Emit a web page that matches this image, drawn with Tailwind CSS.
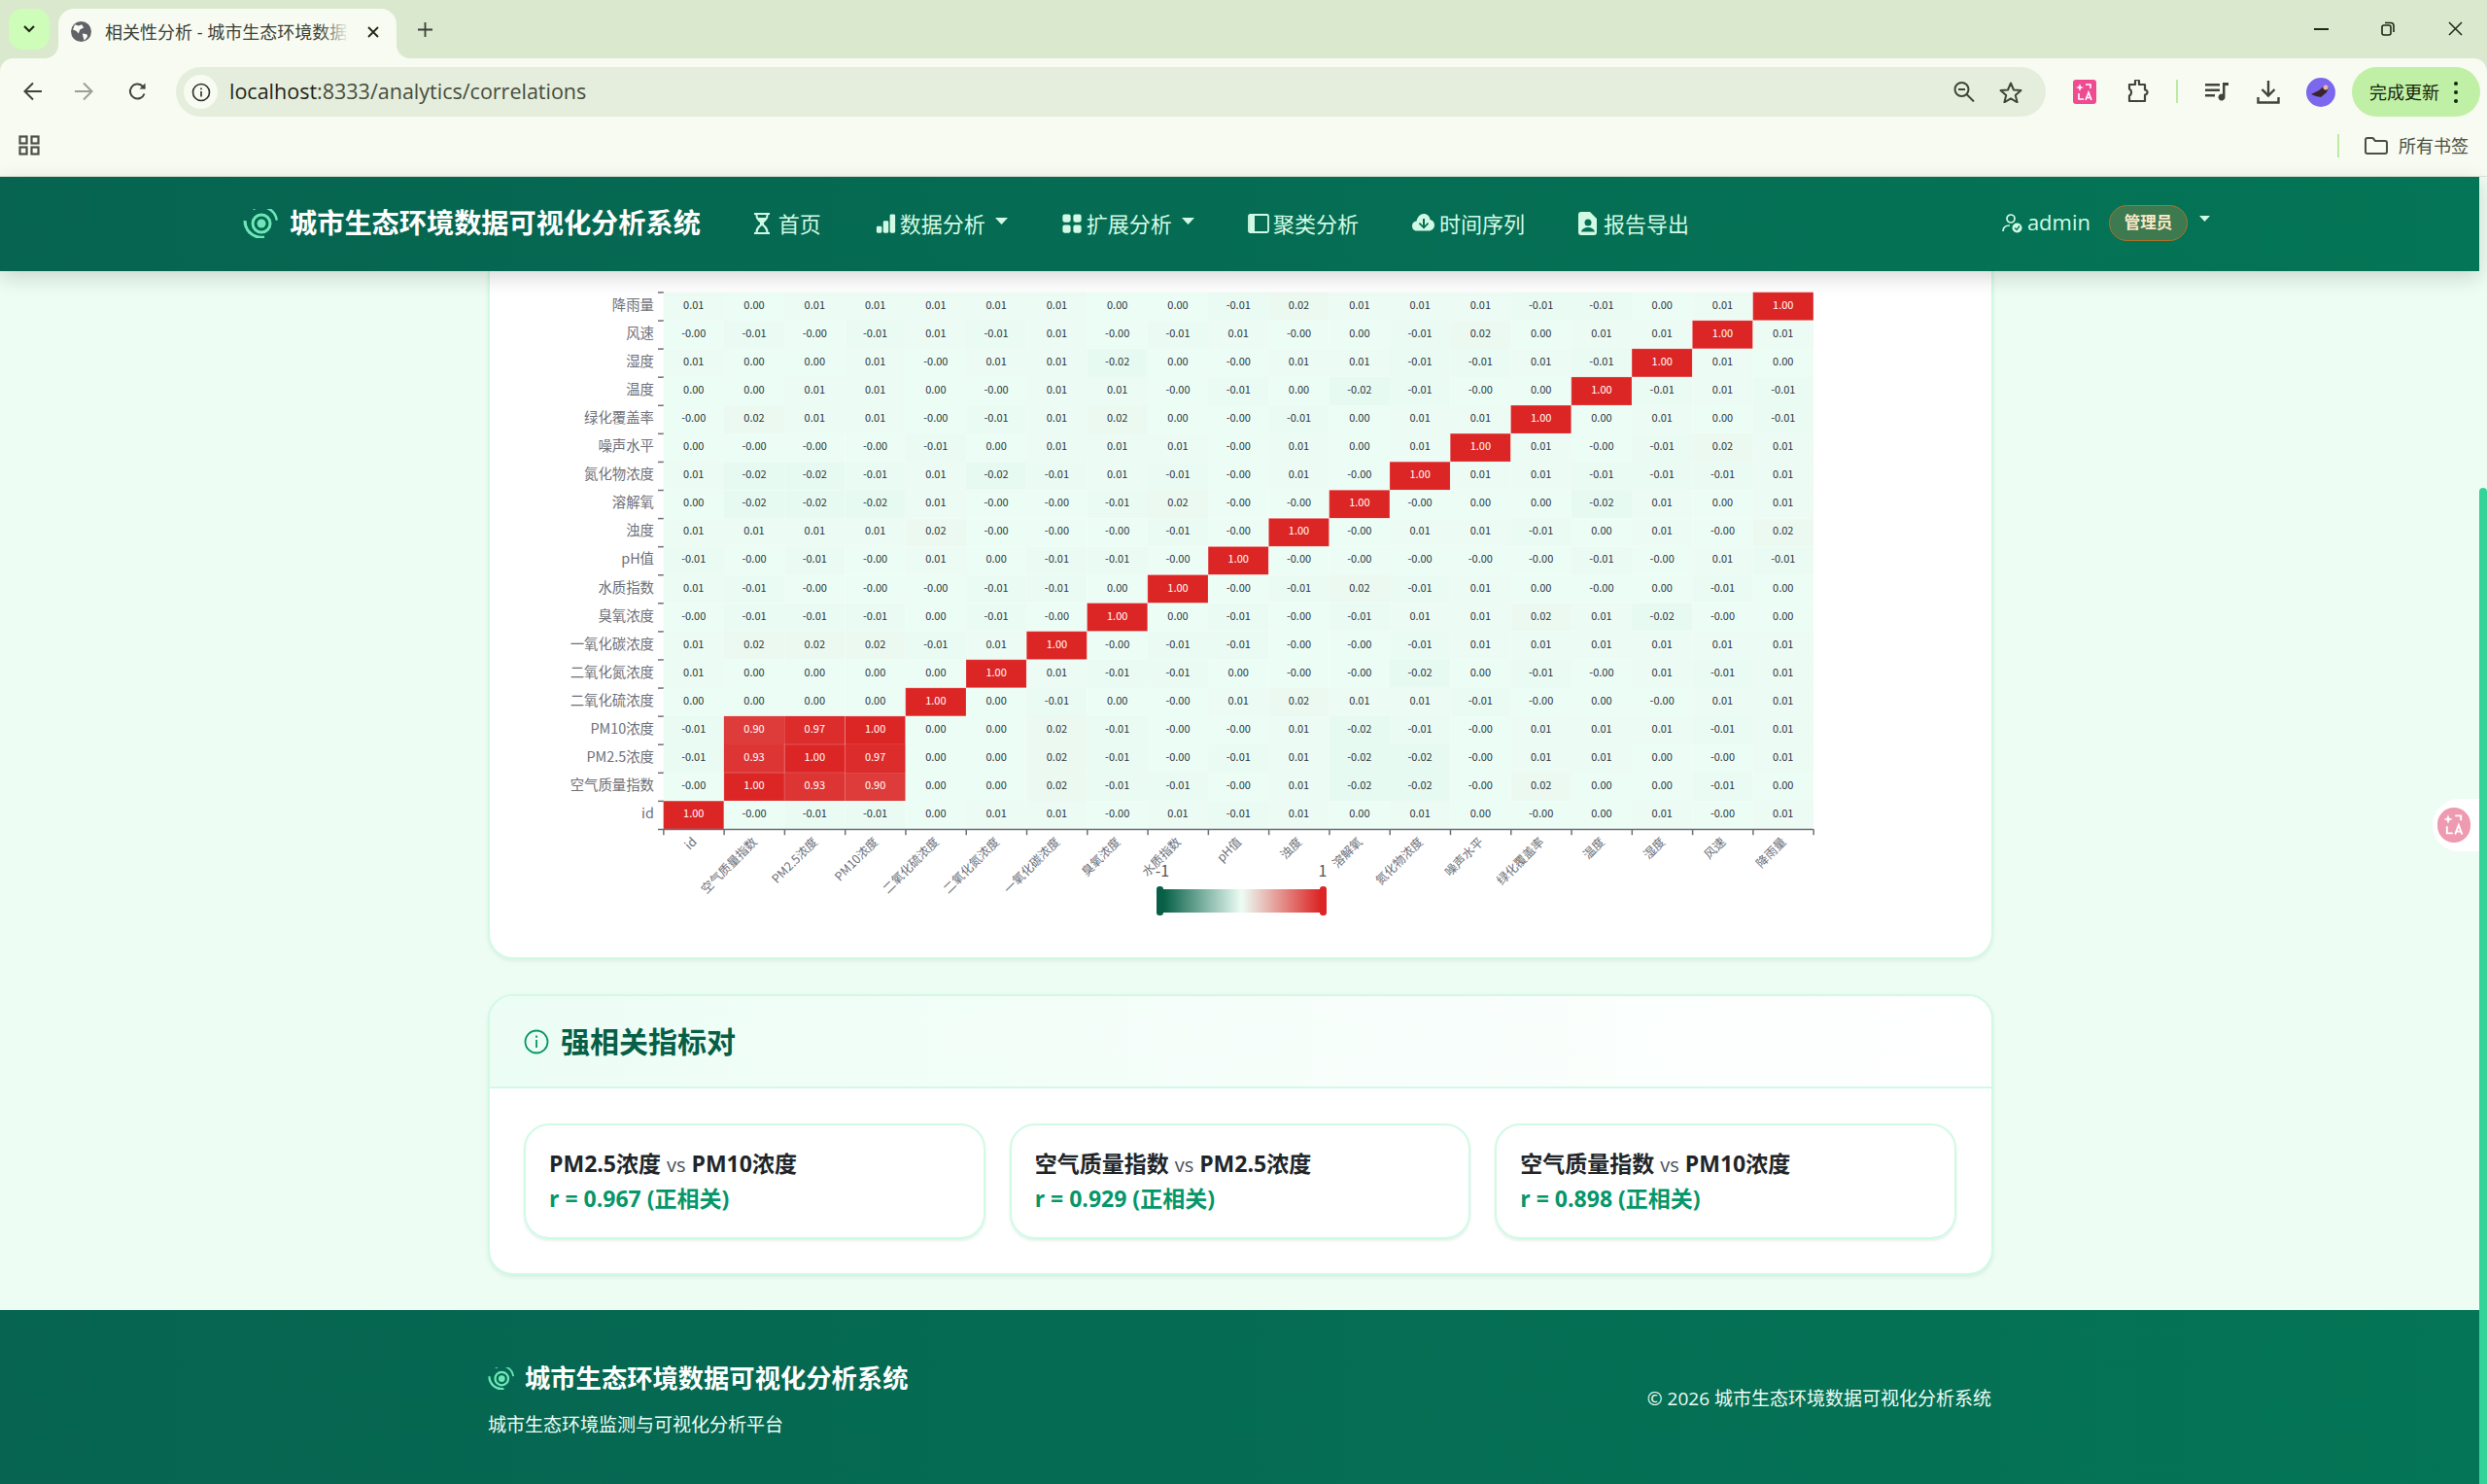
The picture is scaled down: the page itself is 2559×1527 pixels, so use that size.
<!DOCTYPE html>
<html lang="zh-CN">
<head>
    <meta charset="UTF-8">
    <title>相关性分析 - 城市生态环境数据可视化分析系统</title>
    <script src="https://cdn.jsdelivr.net/npm/@tailwindcss/browser@4"></script>
</head>
<body class="w-[2559px] h-[1527px] overflow-hidden bg-[#dae8ce] font-['Open_Sans','Noto_Sans_CJK_SC',sans-serif]">

    <!-- tab strip -->
    <div class="h-[60px] flex items-end">
        <div class="ml-[9px] mb-[9px] w-[42px] h-[42px] rounded-[14px] bg-[#cdfdb8] flex items-center justify-center">
            <svg class="w-[12px] h-[8px]" viewBox="0 0 12 8" fill="none" stroke="#1f2a18" stroke-width="2.2"><path d="M1 1l5 5 5-5"/></svg>
        </div>
        <div class="relative ml-[9px] w-[348px] h-[51px] rounded-t-[16px] bg-[#f7fbf1] flex items-center pl-[13px] pb-[4px]">
            <svg class="absolute left-[-14px] bottom-0 w-[14px] h-[14px]" viewBox="0 0 14 14" fill="#f7fbf1"><path d="M14 0V14H0A14 14 0 0 0 14 0Z"/></svg>
            <svg class="absolute right-[-14px] bottom-0 w-[14px] h-[14px]" viewBox="0 0 14 14" fill="#f7fbf1"><path d="M0 0V14H14A14 14 0 0 1 0 0Z"/></svg>
            <svg class="w-[21px] h-[21px] shrink-0" viewBox="0 0 16 16"><circle cx="8" cy="8" r="8" fill="#5f6368"/><path d="M3 2.5l3 1 2.500-1L10 5 7 6.500 6 9.500 4 7.500 1.500 6.500zM9 9.500l3.500.5.5 2-2.500 3L9.500 12z" fill="#f7fbf1"/></svg>
            <div class="relative ml-[14px] w-[251px] whitespace-nowrap text-[18px] leading-none text-[#3b4136]">
                相关性分析 - 城市生态环境数据
                <div class="absolute right-0 top-0 w-[30px] h-full bg-gradient-to-r from-transparent to-[#f7fbf1]"></div>
            </div>
            <svg class="ml-[19px] w-[12px] h-[12px] shrink-0" viewBox="0 0 12 12" stroke="#1f2a18" stroke-width="1.800"><path d="M1 1l10 10M11 1L1 11"/></svg>
        </div>
        <svg class="ml-[22px] mb-[22px] w-[15px] h-[15px]" viewBox="0 0 15 15" stroke="#3b4136" stroke-width="1.800"><path d="M7.500 0v15M0 7.500h15"/></svg>
        <div class="ml-auto flex items-center mb-[23px] mr-[25px]">
            <div class="w-[15px] h-[2px] bg-[#1f2a18]"></div>
            <svg class="ml-[54px] w-[14px] h-[15px]" viewBox="0 0 14 15" fill="none" stroke="#1f2a18" stroke-width="1.600"><rect x="1" y="4" width="9" height="10" rx="2"/><path d="M4 1.500h6a3 3 0 0 1 3 3V11"/></svg>
            <svg class="ml-[55px] w-[15px] h-[15px]" viewBox="0 0 15 15" stroke="#1f2a18" stroke-width="1.500"><path d="M1 1l13 13M14 1L1 14"/></svg>
        </div>
    </div>

    <!-- toolbar -->
    <div class="h-[122px] rounded-t-[14px] bg-[#f7fbf1] border-b border-[#dfe3d6]">
        <div class="h-[60px] pt-[9px] flex items-start">
            <svg class="ml-[24px] mt-[15px] w-[19px] h-[20px]" viewBox="0 0 19 20" fill="none" stroke="#3f4639" stroke-width="2"><path d="M19 10H2M10 1.500L1.500 10l8.500 8.500"/></svg>
            <svg class="ml-[34px] mt-[15px] w-[19px] h-[20px]" viewBox="0 0 19 20" fill="none" stroke="#9aa096" stroke-width="2"><path d="M0 10h17M9 1.500l8.500 8.500L9 18.500"/></svg>
            <svg class="ml-[36px] mt-[15px] w-[19px] h-[20px]" viewBox="0 0 19 20" fill="none" stroke="#3f4639" stroke-width="2"><path d="M16.500 12.500A7.500 7.500 0 1 1 14.500 4.500L17 7"/><path d="M17.500 1.500V7.500H11.500" fill="#3f4639" stroke="none"/></svg>
            <div class="ml-[30px] w-[1924px] h-[51px] rounded-full bg-[#e5eedc] flex items-center pl-[8px] pr-[24px]">
                <div class="w-[35px] h-[35px] rounded-full bg-[#f7fbf1] flex items-center justify-center">
                    <svg class="w-[20px] h-[20px]" viewBox="0 0 20 20" fill="none" stroke="#2a3024" stroke-width="1.600"><circle cx="10" cy="10" r="8.500"/><path d="M10 9v5.500M10 5.500v1.800"/></svg>
                </div>
                <div class="ml-[12px] mb-[2px] text-[21.500px] leading-none text-[#1f2419] whitespace-nowrap">localhost<span class="text-[#454c3e]">:8333/analytics/correlations</span></div>
                <svg class="ml-auto w-[22px] h-[21px]" viewBox="0 0 22 21" fill="none" stroke="#3f4639" stroke-width="2"><circle cx="8.500" cy="8" r="7"/><path d="M13.500 13l7.500 7.500M5 8h7"/></svg>
                <svg class="ml-[25px] w-[24px] h-[22px]" viewBox="0 0 24 22" fill="none" stroke="#3f4639" stroke-width="2" stroke-linejoin="round"><path d="M12 1.500l3 7 7.500.6-5.700 4.900 1.800 7.300-6.600-4-6.600 4L7.200 14 1.500 9.100 9 8.500z"/></svg>
            </div>
            <div class="ml-[28px] mt-[13px] w-[24px] h-[25px] rounded-[3px] bg-[#ef4b93] flex items-center justify-center">
                <svg class="w-[18px] h-[20px]" viewBox="0 0 18 20" fill="none" stroke="#fff" stroke-width="1.600"><path d="M4 1l1 3 3 1-3 1-1 3-1-3-3-1 3-1z" fill="#fff" stroke="none"/><path d="M10 2h5v4M3 11v6h5M10 18l3-8 3 8M11 15.500h4"/></svg>
            </div>
            <svg class="ml-[31px] mt-[13px] w-[25px] h-[24px]" viewBox="0 0 25 24" fill="none" stroke="#3f4639" stroke-width="2.200" stroke-linejoin="round"><path d="M3 5h6V2a2 2 0 0 1 4 0v3h6v5.500a2.500 2.500 0 0 1 0 5V22H3v-5.500a4 4 0 0 0 0-7z"/></svg>
            <div class="ml-[26px] mt-[13px] w-[2px] h-[24px] bg-[#bdeaa5]"></div>
            <svg class="ml-[28px] mt-[16px] w-[24px] h-[19px]" viewBox="0 0 24 19" fill="#3f4639"><path d="M0 1h15v2.500H0zM0 6.500h15V9H0zM0 12h10v2.500H0z"/><path d="M18 0h6v3h-3.500v12a3.500 3.500 0 1 1-2.500-3.300z"/></svg>
            <svg class="ml-[29px] mt-[14px] w-[24px] h-[24px]" viewBox="0 0 24 24" fill="none" stroke="#3f4639" stroke-width="2.400"><path d="M12 0v15M5.500 9l6.500 6.500L18.500 9M1.500 17v5.500h21V17"/></svg>
            <div class="ml-[27px] mt-[11px] w-[30px] h-[30px] rounded-full bg-[#7c68ee] flex items-center justify-center overflow-hidden">
                <svg class="w-[24px] h-[18px]" viewBox="0 0 24 18"><path d="M2 11l8-4 5-4 5 1-2 5-6 5-5-1z" fill="#3a2430"/><circle cx="17" cy="4" r="2.500" fill="#e8b9a8"/></svg>
            </div>
            <div class="ml-[17px] w-[132px] h-[51px] rounded-full bg-[#bff0a5] flex items-center pl-[18px]">
                <span class="text-[18px] leading-none text-[#14240d] whitespace-nowrap">完成更新</span>
                <div class="ml-[15px] flex flex-col gap-[5px]">
                    <div class="w-[4px] h-[4px] rounded-full bg-[#14240d]"></div>
                    <div class="w-[4px] h-[4px] rounded-full bg-[#14240d]"></div>
                    <div class="w-[4px] h-[4px] rounded-full bg-[#14240d]"></div>
                </div>
            </div>
        </div>
        <div class="h-[61px] flex items-center pb-[2px]">
            <svg class="ml-[19px] w-[22px] h-[21px]" viewBox="0 0 22 21" fill="none" stroke="#4a5043" stroke-width="2.200"><rect x="1.500" y="1.500" width="7" height="7"/><rect x="13.500" y="1.500" width="7" height="7"/><rect x="1.500" y="12.500" width="7" height="7"/><rect x="13.500" y="12.500" width="7" height="7"/></svg>
            <div class="ml-auto w-[2px] h-[24px] bg-[#bdeaa5]"></div>
            <svg class="ml-[26px] w-[24px] h-[18px]" viewBox="0 0 24 18" fill="none" stroke="#4a5043" stroke-width="2" stroke-linejoin="round"><path d="M1 3a2 2 0 0 1 2-2h5.500l2.500 3h10a2 2 0 0 1 2 2v9a2 2 0 0 1-2 2H3a2 2 0 0 1-2-2z"/></svg>
            <span class="ml-[11px] mr-[19px] text-[18px] leading-none text-[#4a5043] whitespace-nowrap">所有书签</span>
        </div>
    </div>

    <!-- page -->
    <div class="h-[1345px] flex">
        <div class="relative w-[2551px] h-full flex flex-col bg-[#eefdf4]">
            <nav class="relative z-10 h-[97px] shrink-0 flex items-center pl-[250px] pr-[277px] pb-[2px] bg-gradient-to-r from-[#066450] to-[#047556] shadow-[0_6px_20px_rgba(0,0,0,0.16)] text-[#d1fae5] text-[22px] leading-none whitespace-nowrap">
                <svg class="w-[36px] h-[30px] shrink-0" viewBox="0 0 36 30" fill="none" stroke="#6ee7b7"><circle cx="19" cy="15" r="4.500" fill="#6ee7b7" stroke="none"/><circle cx="19" cy="15" r="9" stroke-width="3"/><path d="M8 2A16 16 0 0 1 34 9" stroke-width="2.400" transform="rotate(10 19 15)"/><path d="M2 12A17 17 0 0 0 22 29" stroke-width="3"/></svg>
                <span class="ml-[12px] text-[28.200px] font-bold text-white">城市生态环境数据可视化分析系统</span>
                <div class="ml-[54px] flex items-center gap-[55px]">
                    <div class="flex items-center gap-[8px]">
                        <svg class="w-[18px] h-[22px]" viewBox="0 0 18 22" fill="#d1fae5"><path d="M1 0h16v2h-1.500c0 4-2 6-4.500 8v2c2.500 2 4.500 4 4.500 8H17v2H1v-2h1.500c0-4 2-6 4.500-8v-2C4.500 8 2.500 6 2.500 2H1zM4.500 2c0 1 .2 2 .6 3h7.800c.4-1 .6-2 .6-3zM9 13c-2 1.500-4 3.500-4.400 7h8.800C13 16.500 11 14.500 9 13z"/></svg>
                        <span>首页</span>
                    </div>
                    <div class="flex items-center gap-[3px]">
                        <svg class="w-[23px] h-[22px]" viewBox="0 0 16 16" fill="#d1fae5"><path d="M1 11a1 1 0 0 1 1-1h2a1 1 0 0 1 1 1v3a1 1 0 0 1-1 1H2a1 1 0 0 1-1-1zm5-4a1 1 0 0 1 1-1h2a1 1 0 0 1 1 1v7a1 1 0 0 1-1 1H7a1 1 0 0 1-1-1zm5-5a1 1 0 0 1 1-1h2a1 1 0 0 1 1 1v12a1 1 0 0 1-1 1h-2a1 1 0 0 1-1-1z"/></svg>
                        <span>数据分析</span>
                        <svg class="ml-[7px] mb-[4px] w-[13px] h-[7px]" viewBox="0 0 13 7" fill="#d1fae5"><path d="M0 0h13L6.500 7z"/></svg>
                    </div>
                    <div class="flex items-center gap-[4px]">
                        <svg class="w-[22px] h-[22px]" viewBox="0 0 16 16" fill="#d1fae5"><path d="M1 2.500A1.500 1.500 0 0 1 2.500 1h3A1.500 1.500 0 0 1 7 2.500v3A1.500 1.500 0 0 1 5.500 7h-3A1.500 1.500 0 0 1 1 5.500zm8 0A1.500 1.500 0 0 1 10.500 1h3A1.500 1.500 0 0 1 15 2.500v3A1.500 1.500 0 0 1 13.500 7h-3A1.500 1.500 0 0 1 9 5.500zm-8 8A1.500 1.500 0 0 1 2.500 9h3A1.500 1.500 0 0 1 7 10.500v3A1.500 1.500 0 0 1 5.500 15h-3A1.500 1.500 0 0 1 1 13.500zm8 0A1.500 1.500 0 0 1 10.500 9h3a1.500 1.500 0 0 1 1.500 1.500v3a1.500 1.500 0 0 1-1.500 1.500h-3A1.500 1.500 0 0 1 9 13.500z"/></svg>
                        <span>扩展分析</span>
                        <svg class="ml-[6px] mb-[4px] w-[13px] h-[7px]" viewBox="0 0 13 7" fill="#d1fae5"><path d="M0 0h13L6.500 7z"/></svg>
                    </div>
                    <div class="flex items-center gap-[4px]">
                        <svg class="w-[22px] h-[20px]" viewBox="0 0 22 20" fill="none" stroke="#d1fae5" stroke-width="1.800"><rect x="1" y="1" width="20" height="18" rx="1.500"/><path d="M2 2h5v16H2z" fill="#d1fae5" stroke="none"/></svg>
                        <span>聚类分析</span>
                    </div>
                    <div class="flex items-center gap-[5px]">
                        <svg class="w-[23px] h-[20px]" viewBox="0 0 23 20" fill="#d1fae5"><path fill-rule="evenodd" d="M12 0c3.500 0 6 2.500 6.500 6C21 6.500 23 8.500 23 11.500c0 3.500-2.500 6-6 6H5c-3 0-5-2-5-5 0-2.800 2-4.800 4.500-5C5.500 3 8.500 0 12 0zm-1 5v7l-3-3-1.200 1.200L12 15.500l5.200-5.300L16 9l-3 3V5z"/></svg>
                        <span>时间序列</span>
                    </div>
                    <div class="flex items-center gap-[6px]">
                        <svg class="w-[20px] h-[24px]" viewBox="0 0 20 24" fill="#d1fae5"><path fill-rule="evenodd" d="M3 0h9l7 7v14a3 3 0 0 1-3 3H3a3 3 0 0 1-3-3V3a3 3 0 0 1 3-3zm7 7.500a3.500 3.500 0 1 0 0 7 3.500 3.500 0 0 0 0-7zM3 20.500h14c-.6-2.500-3.500-4.500-7-4.500s-6.400 2-7 4.500z"/></svg>
                        <span>报告导出</span>
                    </div>
                </div>
                <div class="ml-auto flex items-center">
                    <svg class="w-[21px] h-[20px]" viewBox="0 0 21 20" fill="none" stroke="#d1fae5" stroke-width="1.700"><circle cx="9" cy="5" r="4"/><path d="M1 18c0-4 3-6 7-6"/><circle cx="15.500" cy="14.500" r="5" fill="#d1fae5" stroke="none"/><path d="M13 14.500l2 2 3-4" stroke="#047857" stroke-width="1.400"/></svg>
                    <span class="ml-[5px] mb-[3px] text-[22px]">admin</span>
                    <span class="ml-[19px] w-[81px] h-[37px] rounded-full bg-[#3d7a4f] border border-[#b07128] flex items-center justify-center text-[#fde8c8] text-[16.500px] font-bold">管理员</span>
                    <svg class="ml-[12px] mb-[10px] w-[11px] h-[6px]" viewBox="0 0 11 6" fill="#d1fae5"><path d="M0 0h11L5.500 6z"/></svg>
                </div>
            </nav>

            <main class="flex-1 flex flex-col pl-[502px]">
                <!-- heatmap card, top is scrolled under the nav -->
                <div class="w-[1549px] h-[708px] shrink-0 rounded-b-[26px] bg-white border-x-2 border-b-2 border-[#d1fae5] shadow-[0_2px_4px_rgba(6,95,70,0.08)]">
                    <svg id="heatmap" class="ml-[56px] w-[1320px] h-[680px] font-['Noto_Sans_CJK_SC',sans-serif]" viewBox="560 279 1320 680"></svg>
                </div>

                <!-- strong pairs -->
                <div class="mt-[36px] w-[1549px] h-[289px] shrink-0 rounded-[26px] bg-white border-2 border-[#d1fae5] shadow-[0_2px_4px_rgba(6,95,70,0.1)] overflow-hidden">
                    <div class="h-[95px] flex items-center pl-[35px] border-b-2 border-[#d1fae5] bg-gradient-to-r from-[#ecfdf5] to-white">
                        <svg class="w-[26px] h-[26px]" viewBox="0 0 26 26" fill="none" stroke="#059669" stroke-width="1.800"><circle cx="13" cy="13" r="11.500"/><path d="M13 11v8M13 6.500v2.200"/></svg>
                        <h2 class="ml-[12px] text-[30px] leading-none font-bold text-[#065f46]">强相关指标对</h2>
                    </div>
                    <div class="grid grid-cols-3 gap-[25px] pt-[36px] pl-[35px] pr-[36px]">
                        <div class="h-[119px] rounded-[26px] border-2 border-[#d1fae5] shadow-[0_2px_3px_rgba(6,95,70,0.1)] pl-[24px] pt-[21px]">
                            <div class="text-[23px] leading-[36px] font-bold text-[#212529]">PM2.5浓度 <span class="font-normal text-[20px] text-[#495057]">vs</span> PM10浓度</div>
                            <div class="text-[23px] leading-[32px] font-bold text-[#059669]">r = 0.967 (正相关)</div>
                        </div>
                        <div class="h-[119px] rounded-[26px] border-2 border-[#d1fae5] shadow-[0_2px_3px_rgba(6,95,70,0.1)] pl-[24px] pt-[21px]">
                            <div class="text-[23px] leading-[36px] font-bold text-[#212529]">空气质量指数 <span class="font-normal text-[20px] text-[#495057]">vs</span> PM2.5浓度</div>
                            <div class="text-[23px] leading-[32px] font-bold text-[#059669]">r = 0.929 (正相关)</div>
                        </div>
                        <div class="h-[119px] rounded-[26px] border-2 border-[#d1fae5] shadow-[0_2px_3px_rgba(6,95,70,0.1)] pl-[24px] pt-[21px]">
                            <div class="text-[23px] leading-[36px] font-bold text-[#212529]">空气质量指数 <span class="font-normal text-[20px] text-[#495057]">vs</span> PM10浓度</div>
                            <div class="text-[23px] leading-[32px] font-bold text-[#059669]">r = 0.898 (正相关)</div>
                        </div>
                    </div>
                </div>
            </main>

            <footer class="h-[179px] shrink-0 flex items-start justify-between pl-[502px] pr-[502px] bg-gradient-to-r from-[#066450] to-[#047556] whitespace-nowrap">
                <div class="mt-[57px]">
                    <div class="flex items-center">
                        <svg class="w-[27px] h-[23px]" viewBox="0 0 36 30" fill="none" stroke="#6ee7b7"><circle cx="19" cy="15" r="4.500" fill="#6ee7b7" stroke="none"/><circle cx="19" cy="15" r="9" stroke-width="3"/><path d="M8 2A16 16 0 0 1 34 9" stroke-width="2.400" transform="rotate(10 19 15)"/><path d="M2 12A17 17 0 0 0 22 29" stroke-width="3"/></svg>
                        <span class="ml-[11px] text-[26.300px] leading-none font-bold text-white">城市生态环境数据可视化分析系统</span>
                    </div>
                    <p class="mt-[26px] text-[19px] leading-none text-[#ecfdf5]">城市生态环境监测与可视化分析平台</p>
                </div>
                <p class="mt-[82px] text-[19px] leading-none text-[#ecfdf5]">© 2026 城市生态环境数据可视化分析系统</p>
            </footer>

            <!-- floating translate button -->
            <div class="absolute right-0 top-[640px] w-[48px] h-[54px] rounded-l-full bg-white flex items-center pl-[5px]">
                <div class="w-[34px] h-[36px] rounded-full bg-[#ee9ab0] flex items-center justify-center">
                    <svg class="w-[22px] h-[24px]" viewBox="0 0 18 20" fill="none" stroke="#fff" stroke-width="1.600"><path d="M4 1l1 3 3 1-3 1-1 3-1-3-3-1 3-1z" fill="#fff" stroke="none"/><path d="M10 2h5v4M3 11v6h5M10 18l3-8 3 8M11 15.500h4"/></svg>
                </div>
            </div>
        </div>

        <!-- page scrollbar -->
        <div class="w-[8px] h-full flex flex-col pt-[320px] bg-[#eefdf4]">
            <div class="flex-1 rounded-t-[4px] bg-[#34d399]"></div>
        </div>
    </div>

    <script>
        const labels = ['id', '空气质量指数', 'PM2.5浓度', 'PM10浓度', '二氧化硫浓度', '二氧化氮浓度', '一氧化碳浓度', '臭氧浓度', '水质指数', 'pH值', '浊度', '溶解氧', '氮化物浓度', '噪声水平', '绿化覆盖率', '温度', '湿度', '风速', '降雨量'];

        // top row first, same order as the chart
        const rows = [
            '0.01 0.00 0.01 0.01 0.01 0.01 0.01 0.00 0.00 -0.01 0.02 0.01 0.01 0.01 -0.01 -0.01 0.00 0.01 1.00',
            '-0.00 -0.01 -0.00 -0.01 0.01 -0.01 0.01 -0.00 -0.01 0.01 -0.00 0.00 -0.01 0.02 0.00 0.01 0.01 1.00 0.01',
            '0.01 0.00 0.00 0.01 -0.00 0.01 0.01 -0.02 0.00 -0.00 0.01 0.01 -0.01 -0.01 0.01 -0.01 1.00 0.01 0.00',
            '0.00 0.00 0.01 0.01 0.00 -0.00 0.01 0.01 -0.00 -0.01 0.00 -0.02 -0.01 -0.00 0.00 1.00 -0.01 0.01 -0.01',
            '-0.00 0.02 0.01 0.01 -0.00 -0.01 0.01 0.02 0.00 -0.00 -0.01 0.00 0.01 0.01 1.00 0.00 0.01 0.00 -0.01',
            '0.00 -0.00 -0.00 -0.00 -0.01 0.00 0.01 0.01 0.01 -0.00 0.01 0.00 0.01 1.00 0.01 -0.00 -0.01 0.02 0.01',
            '0.01 -0.02 -0.02 -0.01 0.01 -0.02 -0.01 0.01 -0.01 -0.00 0.01 -0.00 1.00 0.01 0.01 -0.01 -0.01 -0.01 0.01',
            '0.00 -0.02 -0.02 -0.02 0.01 -0.00 -0.00 -0.01 0.02 -0.00 -0.00 1.00 -0.00 0.00 0.00 -0.02 0.01 0.00 0.01',
            '0.01 0.01 0.01 0.01 0.02 -0.00 -0.00 -0.00 -0.01 -0.00 1.00 -0.00 0.01 0.01 -0.01 0.00 0.01 -0.00 0.02',
            '-0.01 -0.00 -0.01 -0.00 0.01 0.00 -0.01 -0.01 -0.00 1.00 -0.00 -0.00 -0.00 -0.00 -0.00 -0.01 -0.00 0.01 -0.01',
            '0.01 -0.01 -0.00 -0.00 -0.00 -0.01 -0.01 0.00 1.00 -0.00 -0.01 0.02 -0.01 0.01 0.00 -0.00 0.00 -0.01 0.00',
            '-0.00 -0.01 -0.01 -0.01 0.00 -0.01 -0.00 1.00 0.00 -0.01 -0.00 -0.01 0.01 0.01 0.02 0.01 -0.02 -0.00 0.00',
            '0.01 0.02 0.02 0.02 -0.01 0.01 1.00 -0.00 -0.01 -0.01 -0.00 -0.00 -0.01 0.01 0.01 0.01 0.01 0.01 0.01',
            '0.01 0.00 0.00 0.00 0.00 1.00 0.01 -0.01 -0.01 0.00 -0.00 -0.00 -0.02 0.00 -0.01 -0.00 0.01 -0.01 0.01',
            '0.00 0.00 0.00 0.00 1.00 0.00 -0.01 0.00 -0.00 0.01 0.02 0.01 0.01 -0.01 -0.00 0.00 -0.00 0.01 0.01',
            '-0.01 0.90 0.97 1.00 0.00 0.00 0.02 -0.01 -0.00 -0.00 0.01 -0.02 -0.01 -0.00 0.01 0.01 0.01 -0.01 0.01',
            '-0.01 0.93 1.00 0.97 0.00 0.00 0.02 -0.01 -0.00 -0.01 0.01 -0.02 -0.02 -0.00 0.01 0.01 0.00 -0.00 0.01',
            '-0.00 1.00 0.93 0.90 0.00 0.00 0.02 -0.01 -0.01 -0.00 0.01 -0.02 -0.02 -0.00 0.02 0.00 0.00 -0.01 0.00',
            '1.00 -0.00 -0.01 -0.01 0.00 0.01 0.01 -0.00 0.01 -0.01 0.01 0.00 0.01 0.00 -0.00 0.00 0.01 -0.00 0.01'
        ];

        const left = 682.6, top_ = 300.7, cw = 62.28, ch = 29.08;
        const low = [6, 95, 70], mid = [236, 253, 245], high = [220, 38, 38];

        function cellColor(v) {
            const to = v < 0 ? low : high;
            const t = Math.abs(v);
            return 'rgb(' + mid.map((m, i) => Math.round(m + (to[i] - m) * t)).join(',') + ')';
        }

        let svg = '<defs><linearGradient id="vm"><stop offset="0" stop-color="#065f46"/><stop offset="0.5" stop-color="#ecfdf5"/><stop offset="1" stop-color="#dc2626"/></linearGradient></defs>';

        rows.forEach((row, r) => {
            const y = top_ + r * ch;
            svg += `<text x="673" y="${y + ch / 2 - 3}" text-anchor="end" dominant-baseline="central" font-size="14.400" fill="#6e7079">${labels[18 - r]}</text>`;
            svg += `<rect x="677" y="${y - 0.5}" width="6" height="1.500" fill="#6e7079"/>`;
            row.split(' ').forEach((val, c) => {
                const v = parseFloat(val);
                const x = left + c * cw;
                svg += `<rect x="${x}" y="${y}" width="${cw}" height="${ch}" fill="${cellColor(v)}"${v === 1 ? ' stroke="#fff" stroke-opacity="0.2"' : ''}/>`;
                svg += `<text x="${x + cw / 2}" y="${y + ch / 2 - 2.5}" text-anchor="middle" dominant-baseline="central" font-size="11" fill="${v > 0.5 ? '#fff' : '#333'}">${val}</text>`;
            });
        });

        // x axis
        const bottom = top_ + 19 * ch;
        svg += `<rect x="677" y="${bottom - 0.5}" width="${19 * cw + 5.5}" height="1.500" fill="#6e7079"/>`;
        for (let c = 0; c <= 19; c++) {
            svg += `<rect x="${left + c * cw - 0.5}" y="${bottom}" width="1.500" height="6" fill="#6e7079"/>`;
        }
        labels.forEach((name, c) => {
            const x = left + (c + 0.5) * cw, y = bottom + 10;
            svg += `<text transform="translate(${x} ${y}) rotate(-45)" text-anchor="end" dominant-baseline="central" font-size="12.500" fill="#6e7079">${name}</text>`;
        });

        // visual map
        svg += '<text x="1196" y="895" text-anchor="middle" dominant-baseline="central" font-size="16" fill="#555">-1</text>';
        svg += '<text x="1361" y="895" text-anchor="middle" dominant-baseline="central" font-size="16" fill="#555">1</text>';
        svg += '<rect x="1197" y="915" width="161" height="24" fill="url(#vm)"/>';
        svg += '<rect x="1190" y="912" width="7" height="30" rx="3" fill="#065f46"/>';
        svg += '<rect x="1358" y="912" width="7" height="30" rx="3" fill="#dc2626"/>';

        document.getElementById('heatmap').innerHTML = svg;
    </script>
</body>
</html>
